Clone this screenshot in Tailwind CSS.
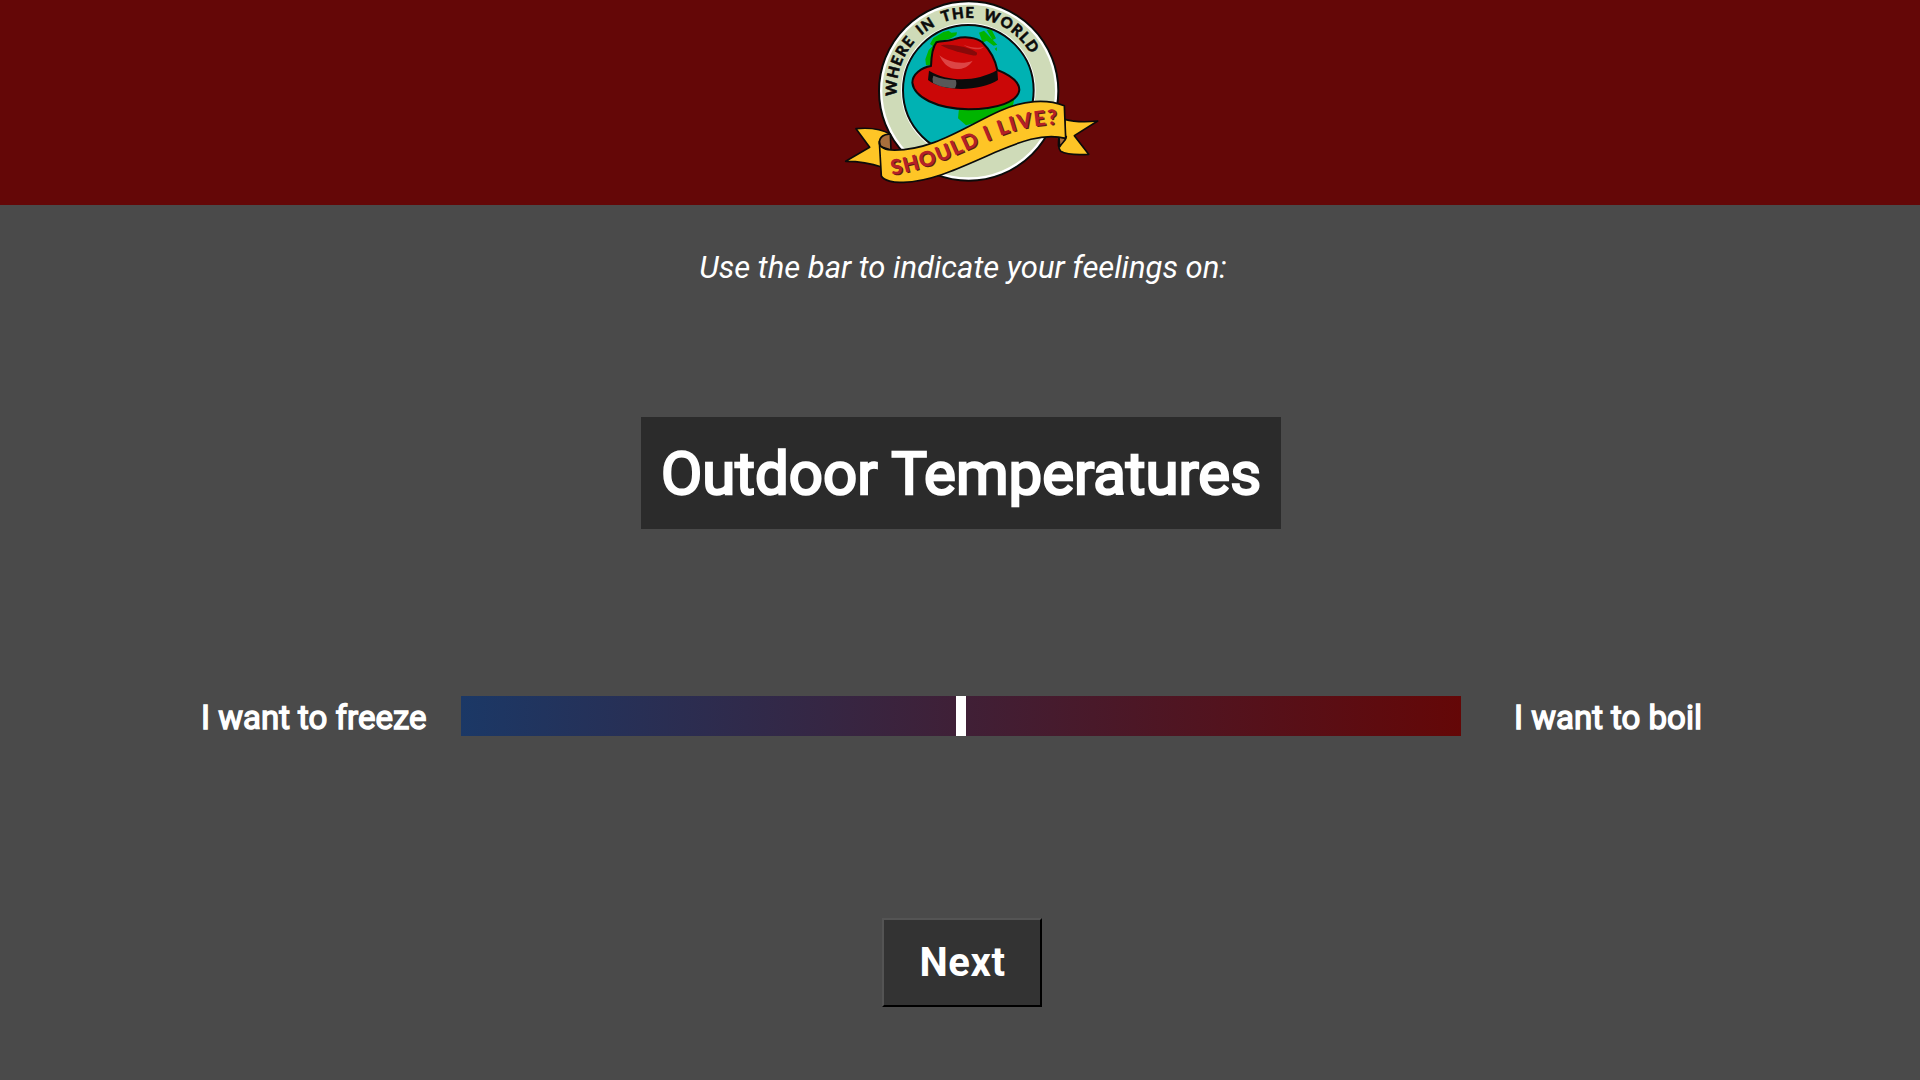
<!DOCTYPE html>
<html lang="en">
<head>
<meta charset="utf-8">
<title>Where in the World Should I Live?</title>
<script src="https://cdn.jsdelivr.net/npm/@tailwindcss/browser@4"></script>
</head>
<body class="h-screen overflow-hidden bg-[#4a4a4a] font-['Roboto',sans-serif] text-white">
<div class="flex h-full flex-col items-center">
  <header class="flex h-[205px] w-full shrink-0 justify-center bg-[#640707] pl-5">
    <svg class="h-[205px] w-[260px]" viewBox="0 0 780 615" fill="none" stroke-linejoin="round" role="img" aria-label="Where in the world should I live?">
      <defs>
        <path id="arc" d="M171 288A215 215 0 0 1 584 187"/>
        <path id="wave" d="M156 525C275 506 365 456 450 420S580 376 668 372"/>
        <clipPath id="globe"><circle cx="385" cy="271" r="194"/></clipPath>
      </defs>
      <!-- badge ring and globe -->
      <circle cx="386" cy="273" r="269" fill="#fff" stroke="#0b0b0b" stroke-width="6"/>
      <circle cx="386" cy="273" r="259" fill="#cfdbb8"/>
      <circle cx="385" cy="271" r="202" fill="#fff"/>
      <circle cx="385" cy="271" r="196" fill="#00b2b3" stroke="#0b0b0b" stroke-width="6"/>
      <g clip-path="url(#globe)" fill="#00b400">
        <path d="M280 114L310 96L326 92L334 98L351 97L349 106L330 116L290 126L272 196L258 196L256 178L266 150L278 138L270 132Z"/>
        <path d="M417 98L432 92L472 134L461 137L440 122L428 128ZM440 90L454 88L468 115L458 120ZM464 146L471 142L470 154Z"/>
        <path d="M357 325L440 328L523 298L518 320L440 360L378 376L354 355Z"/>
      </g>
      <!-- hat -->
      <path d="M273 198C274 170 280 138 289 127C310 122 330 124 347 116C375 108 410 113 426 126C450 150 466 180 472 210C505 223 538 244 538 270C534 306 470 328 385 328C290 326 222 292 217 248C217 224 244 202 273 198Z" fill="#cb0707" stroke="#0b0b0b" stroke-width="6"/>
      <path d="M267 212C325 247 410 246 472 210L474 240C425 272 315 279 264 240Z" fill="#0b0b0b"/>
      <path d="M280 227C302 237 325 239 347 240Q352 252 345 265C318 264 294 258 279 249Q275 238 280 227Z" fill="#585858"/>
      <path d="M302 136C340 130 388 143 411 158Q413 169 397 166C370 160 330 151 302 136Z" fill="#870909"/>
      <path d="M370 134C392 142 414 146 432 140Q423 150 401 147C386 143 378 140 370 134Z" fill="#d83a3a"/>
      <path d="M298 166C325 188 368 194 398 182C384 205 357 211 334 205Q312 196 298 166Z" fill="#dc4545"/>
      <!-- ribbon -->
      <g stroke="#0b0b0b" stroke-width="5">
        <path d="M151 403C128 389 90 382 48 386L89 442L17 484C48 484 88 488 125 501L140 440Z" fill="#fec526"/>
        <path d="M118 430C118 409 134 401 151 403L153 450L121 440Z" fill="#a96f3c"/>
        <path d="M674 358C706 367 744 366 773 363L703 407L746 463C714 465 680 464 662 454C653 442 655 430 657 411L676 410Z" fill="#fec526"/>
        <path d="M657 411L679 410C678 422 666 427 659 441Z" fill="#a96f3c"/>
        <path d="M118 425C118 441 132 448 153 450C275 455 378 378 479 333C550 300 620 296 673 317L677 415C605 397 530 430 475 453C370 498 280 545 190 547C160 549 132 542 124 528Z" fill="#fec526"/>
      </g>
      <g class="font-['Lato',sans-serif]">
        <text class="[word-spacing:10px]" fill="#0b0b0b" stroke="#0b0b0b" stroke-width="1.5" font-size="45" font-weight="900"><textPath href="#arc" textLength="583">WHERE IN THE WORLD</textPath></text>
        <text transform="translate(4 3)" fill="#5e1c16" font-size="62" font-weight="900"><textPath href="#wave" textLength="522">SHOULD I LIVE?</textPath></text>
        <text fill="#b42127" font-size="62" font-weight="900"><textPath href="#wave" textLength="522">SHOULD I LIVE?</textPath></text>
      </g>
    </svg>
  </header>
  <p class="mt-[45px] pl-1.5 text-[31px] leading-9 italic">Use the bar to indicate your feelings on:</p>
  <h1 class="mt-[131px] ml-0.5 flex h-28 w-[640px] items-center justify-center bg-[#2b2b2b] pt-0.5 text-[60px] leading-none whitespace-nowrap [-webkit-text-stroke:2.4px_white]">Outdoor Temperatures</h1>
  <div class="mt-[167px] flex h-10 w-full items-center text-[33px] leading-10 [-webkit-text-stroke:1.4px_white]">
    <span class="w-[461px] pt-1 pl-[201px] whitespace-nowrap">I want to freeze</span>
    <div class="flex h-10 w-[1000px] justify-center bg-linear-to-r/srgb from-[#1b3866] to-[#640707]"><i class="h-10 w-2.5 bg-white"></i></div>
    <span class="pt-1 pl-[53px] whitespace-nowrap">I want to boil</span>
  </div>
  <button class="mt-[182px] ml-1 h-[89px] w-[160px] border-2 border-t-[#545454] border-l-[#545454] border-r-black border-b-black bg-[#333] pl-px text-[40px] font-bold tracking-[0.6px]">Next</button>
</div>
</body>
</html>
